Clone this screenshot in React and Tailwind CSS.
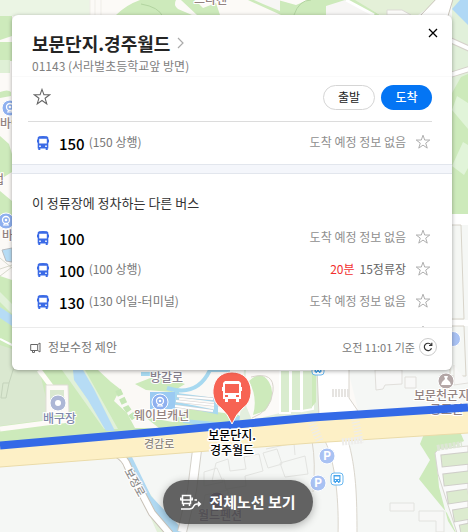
import React from "react";

const routes = [
  { number: "100", direction: "", arrival: "도착 예정 정보 없음" },
  { number: "100", direction: "(100 상행)", minutes: "20분", stops: "15정류장" },
  { number: "130", direction: "(130 어일-터미널)", arrival: "도착 예정 정보 없음" },
  {},
];

function StarIcon({ className }) {
  return (
    <svg viewBox="0 0 17 17" className={className} fill="none" stroke="currentColor" strokeLinejoin="miter" aria-hidden="true">
      <path d="M8.500 1.300l1.800 5.100h5.400l-4.300 3.300 1.600 5.300-4.500-3.200L4 15l1.600-5.300-4.300-3.300h5.400z" />
    </svg>
  );
}

function BusIcon() {
  return (
    <svg viewBox="0 0 12 14" className="h-3.5 w-3 shrink-0" aria-hidden="true">
      <path fill="#3a6ae6" fillRule="evenodd" d="M2 .3Q6-.3 10 .3L11.300 1.500V3.500h.7v3h-.7v6h-.6V14H8.700v-1.500H3.300V14h-2v-1.500H.7v-6H0v-3h.7v-2zM2.200 2.800v4.700h7.600v-4.700zM2.200 9.500v1.400h1.600V9.500zM8.200 9.500v1.400h1.600V9.500z" />
    </svg>
  );
}

function RouteRow({ route }) {
  return (
    <li className="flex h-8 items-center pr-[21px] pl-[25px]">
      <BusIcon />
      <a href="#route" className="ml-2.5 flex items-center gap-1">
        <span className="mt-0.5 text-[15px] leading-5 font-medium text-black">{route.number}</span>
        <span className="mb-0.5 text-xs leading-5 text-[#777]">{route.direction}</span>
      </a>
      <span className="mb-0.5 ml-auto flex gap-[5px] text-xs leading-5 text-[#8f8f8f]">
        {route.minutes ? (
          <>
            <span className="text-[#f22f2f]">{route.minutes}</span>
            <span className="text-[#666]">{route.stops}</span>
          </>
        ) : (
          route.arrival
        )}
      </span>
      <button type="button" aria-label="즐겨찾기" className="mb-0.5 ml-[9px] text-[#aaa]">
        <StarIcon className="size-4" />
      </button>
    </li>
  );
}

function ParkingPin({ x, y }) {
  return (
    <g>
      <circle cx={x} cy={y} r="8" fill="#a9c2f3" stroke="#fff" />
      <text x={x} y={y + 4} fontSize="12" fontWeight="700" fill="#fff" textAnchor="middle">P</text>
    </g>
  );
}

function RidePin({ x, y }) {
  return (
    <g>
      <circle cx={x} cy={y} r="8" fill="#8eb0ef" stroke="#fff" />
      <circle cx={x} cy={y - 1} r="3.500" fill="none" stroke="#fff" strokeWidth="1.300" />
      <circle cx={x} cy={y - 1} r="1.300" fill="#fff" />
      <path d={`M${x - 3} ${y + 4}h6M${x - 1} ${y + 2}l-1 2M${x + 1} ${y + 2}l1 2`} stroke="#fff" />
    </g>
  );
}

function StopPin({ x, y }) {
  return (
    <g>
      <rect x={x - 6} y={y - 6} width="12" height="12" rx="3" fill="#fff" stroke="#68b7f0" />
      <path fill="#48a5ec" fillRule="evenodd" d={`M${x - 3.5} ${y - 4}h7v7h-1v1h-1.500v-1h-2v1h-1.500v-1h-1zM${x - 2.3} ${y - 2.5}v2.500h4.600v-2.500zM${x - 2} ${y + 1}v1h1v-1zM${x + 1} ${y + 1}v1h1v-1z`} />
    </g>
  );
}

function MapBackground() {
  return (
    <svg viewBox="0 0 468 532" preserveAspectRatio="xMidYMin slice" className="absolute inset-0 h-full w-full" role="img" aria-label="지도">
      <rect width="468" height="532" fill="#f5f7f5" />
      {/* upper park */}
      <path fill="#fcfaf7" d="M0 0H400V420H0z" />
      <path fill="#ebf5e4" d="M0 0H90V16H0z" />
      <path fill="#cdeabb" d="M0 16h12v20L0 40zM0 42h12v19H0zM0 136l9 8 3 10v18l-8 5-4-2zM0 191l12 10v15l-12 8zM116 15q10-10 24-15h36q-3 5 2 9l14 6z" />
      <path fill="#dff0d6" d="M0 60h10v13H0z" />
      <path fill="#cdeabb" d="M0 92q8-3 11 0v4L0 98zM181 0h14l8 8 13-5 4 12h-23zM248 0h30l18 5 12-5h50l22 15H281z" />
      <path fill="#f7f6f5" d="M254 0h26v11l-17-7zM326 6l19-6 28 15h-47z" />
      <path fill="#e4f0d8" d="M355 0h84l-21 15h-38z" />
      <path d="M346 0l28 15" stroke="#fff" strokeWidth="3" />
      <path fill="#fcfcfa" stroke="#dddad6" d="M387 10h15l9 5h-24z" />
      <path d="M90 0v15M95 0v15M101 0v15" stroke="#efede8" />
      <path fill="none" stroke="#b2d4a0" d="M141 4q18 3 22 13M294 15q5-15 17-15" />
      <path fill="#e1f0da" d="M452 0h16v123h-16z" />
      <path fill="#b0d8f5" d="M452 9l8-9h8v25z" />
      <path d="M420 16L439 -4h15L448 16" fill="#fff" stroke="#c9c3b9" />
      <path d="M450 40l20 9M450 75l19-6" stroke="#d5d1ca" strokeWidth="6" />
      <path d="M450 40l20 9M450 75l19-6" stroke="#fff" strokeWidth="4" />
      <path fill="#cdeabb" d="M452 93l9-16 7-3v140h-16z" />
      <path fill="#e1f4d9" d="M452 110l5-14 11 7v26zM452 166l11-24 5 3v23l-4 7z" />
      <path fill="#fff" d="M452 214h16v11h-16zM452 320h16v6h-16z" />
      <path fill="#f5f7f4" stroke="#d8d4ca" d="M450 225h11l3 94h-14zM450 326h14l2 50h-16z" />

      {/* left river and lower park */}
      <path fill="#fbf9f6" d="M0 222h12v50H0z" />
      <path d="M0 276l12-9M0 269l12-4M0 258l12 10" stroke="#d8d9cd" />
      <path fill="#b6dcf5" stroke="#b8bcc0" d="M2 250l10-2v14l-6-1z" />
      <path fill="#cdeabb" d="M0 276l12 4v96H0z" />
      <path fill="#e1f1d9" d="M0 292l12 12v10L0 302z" />
      <path fill="#b6dcf5" d="M0 307l12 8v11l-12-8z" />
      <path d="M0 339l14 7" stroke="#fff" strokeWidth="2" />
      <path fill="#cdeabb" d="M0 365h130l32 66L0 447z" />
      <path fill="#dae8d0" d="M0 345l12 4v16h26l13 54L0 426z" />
      <path fill="none" stroke="#c4d3bb" d="M14 367l-5 16H3l-2 15h5l3-15" />
      <path d="M39 370l15 20" stroke="#fffdf8" strokeWidth="5" />
      <path fill="#fdfaf7" stroke="#e0ddd7" d="M46 385h22l1 28-23 4z" />
      <rect x="50" y="390" width="14" height="16" fill="#dae8d0" />
      <path d="M0 429l69-9V412" fill="none" stroke="#fdfaf7" strokeWidth="5" />
      <path fill="#e1f1d9" d="M62 370l42 59h14L85 370z" />
      <path fill="#b6dcf5" d="M73 370h10l11 19 21 42h-9l-18-31-14-20z" />
      <path fill="#fbf9f6" d="M98 370h120v58h-83l-8-15-13-12 6-12-9-7z" />
      <path fill="#cdeabb" d="M135 384l23-9 27 9-13 8-26-2zM145 417l28 5 14-14 52 7v10l-75 7z" />
      <path fill="none" stroke="#c5e6b5" strokeWidth="6" strokeDasharray="6 3" d="M118 390l8 17 10 14" />
      <path fill="none" stroke="#a8d9f0" strokeWidth="4" d="M141 374h14M167 388c22 7 35-1 43-18h20M157 394h20v14M177 395l39 5v12l-39-8M183 421l43 4 17-9" />
      <rect x="150" y="392" width="25" height="17" fill="#9bcaf2" />
      <path fill="none" stroke="#d3d0d0" strokeWidth="3" d="M177 396l36 3M176 401l38 4M175 406l38 5" />
      <path fill="none" stroke="#fff" strokeWidth="2" d="M177 396l36 3M176 401l38 4M175 406l38 5" />
      <path fill="#e3efde" d="M244 370h85v46l-90 10z" />
      <path fill="#fcfaf8" d="M246 370h34v43l-28 7-8-19z" />
      <path fill="#cdeabb" d="M249 381q12-12 20 1t-4 29l-12 4q5-17-4-34z" />
      <path fill="none" stroke="#d9d4cd" d="M251 377q24-6 22 14t-21 27" />
      <path fill="#d9ecce" stroke="#fff" strokeWidth="2" d="M280 370h10v43h-10zM291 370h10v41h-10zM302 370h11v39l-11 2z" />
      <path fill="#cdeabb" d="M312 370h4v32l-4 5z" />
      <path fill="#f5f7f5" d="M348 370h52v42l-42-2z" />
      <path fill="#fff" stroke="#d8d4cd" d="M317 369h32v29l9 13-39 6z" />
      <path fill="#f8f8f7" stroke="#e1dfdb" d="M375 370h27v14l-17 1-2 4-7 1zM405 377h11v11h-11zM454 365v20l14-2" />
      <path d="M332 393h17" stroke="#e6e4e1" strokeWidth="8" strokeDasharray="2 1" />
      <circle cx="453" cy="339" r="7.500" fill="#a9c2f3" stroke="#fff" />

      {/* lower area */}
      <path fill="#e2f0d9" d="M124 457l44 62 17 13h-28z" />
      <path fill="#b0d9f2" d="M127 457h5l19 39 34 36h-13l-26-29z" />
      <path fill="none" stroke="#c8c1b7" strokeWidth="8" d="M117 454q8 4 11 13l24 46 18 21" />
      <path fill="none" stroke="#fff" strokeWidth="6" d="M117 454q8 4 11 13l24 46 18 21" />
      <path fill="none" stroke="#d3d0c9" strokeWidth="10" d="M197 450l-5 40-10 42" />
      <path fill="none" stroke="#fff" strokeWidth="8" d="M197 450l-5 40-10 42" />
      <path fill="none" stroke="#e3e4e1" d="M216 463l12-4 2 12 16-2-2-12 15-3 4 17-18 5 1 10-20 3-2-10-12 2zM204 472l13-4 6 14-19 4zM263 453l14-4 5 15-14 4zM280 463l25-7 3 18-23 3zM205 495l23-5v18l-26 4zM266 449l28-6 1 12" />
      <path fill="#fff" stroke="#dad6cd" d="M325 441l23-1c8 29 9 55 9 95h-19c1-31-2-72-13-94z" />
      <path fill="none" stroke="#dad6cd" d="M312 441q4 22 1 51" />
      <path fill="#cdeabb" d="M424 434h37l3 7-28 13 3 33 9 34 10 16-11-24-28-34 11-19-10-16z" />
      <path fill="#fafafa" stroke="#d8d6d1" d="M435 453q4-6 12-5l21-2v90h-10l-10-31-10-31z" />
      <path d="M441 461l28-3M443 480l26-3M447 498l21-3M453 516l18-3M460 531l10-2" stroke="#cfcec9" strokeWidth="13" />
      <path d="M442 461l27-3M444 480l25-3M448 498l20-3M454 516l16-3M461 531l10-2" stroke="#dcebcf" strokeWidth="11" />
      <path d="M437 448l25-4" stroke="#dde6d5" strokeWidth="6" strokeDasharray="3 1" />
      <path fill="#f7f7f6" stroke="#e2e3df" d="M390 503h24v8h-24zM419 511h25v21h-8v-11h-17z" />

      {/* main road and selected line */}
      <path fill="#fdf0c6" d="M0 446l156-12 156-15 156-10v24l-156 10-156 12-156 12z" />
      <path fill="none" stroke="#eadba9" d="M0 467l156-12 156-12 156-10" />
      <path d="M355 419l5 24M312 423l8 19" stroke="#ececec" strokeWidth="8" strokeDasharray="1 2" />
      <path d="M342 442l20-2" stroke="#eeedeb" strokeWidth="7" strokeDasharray="2 1" />

      <RidePin x={10} y={108} />
      <RidePin x={6} y={221} />
      <RidePin x={160} y={402} />
      <circle cx="58" cy="403" r="8" fill="#adb7d6" stroke="#fff" />
      <circle cx="58" cy="403" r="3" fill="#fff" />
      <circle cx="446" cy="381" r="8" fill="#b4a7a7" stroke="#fff" />
      <path d="M444 376h4l-1 3q3 2 4 6h-10q1-4 4-6z" fill="#fff" />
      <ParkingPin x={327} y={456} />
      <ParkingPin x={318} y={483} />
      <StopPin x={337} y={479} />
      <StopPin x={318} y={369} />
      <circle cx="217" cy="500" r="8" fill="#8f72a5" stroke="#fff" />
      <circle cx="217" cy="500" r="3" fill="#fff" />

      <g fontSize="12" fontWeight="500" stroke="#fff" strokeWidth="2" paintOrder="stroke" fill="#938280">
        <text x="194" y="4">드라켄</text>
        <text x="0" y="128">바이</text>
        <text x="-7" y="184">컵</text>
        <text x="2" y="240">바</text>
        <text x="134" y="420">웨이브캐넌</text>
        <text x="414" y="400">보문천군지구</text>
        <text x="430" y="414">공조원</text>
        <text x="43" y="423" fill="#7f89ab">배구장</text>
        <text x="150" y="382" fill="#88828e">방갈로</text>
        <text x="198" y="520" fill="#8b799c">월드펜션</text>
        <text x="144" y="448" fontSize="11" fill="#918a81" strokeWidth="1">경감로</text>
        <text x="124" y="471" fontSize="11" fill="#8e8e8e" transform="rotate(61 124 471)">보정로</text>
      </g>

      <path fill="none" stroke="#346ae7" strokeWidth="8" d="M0 445.500l156-13.500 156-14.500 156-10" />

      <path fill="#f76353" stroke="#fff" d="M232 424q-4-10-11-16c-13-8-11-36 11-36s24 28 11 36q-7 6-11 16z" />
      <path fill="#fff" fillRule="evenodd" d="M225 381h14l2 2v4h1v4h-1v8h-2v3h-3v-3h-8v3h-3v-3h-2v-8h-1v-4h1v-4zM225 384v9h14v-9zM225 395v2h3v-2zM236 395v2h3v-2z" />
      <g fontSize="12" fontWeight="500" fill="#000" stroke="#fff" strokeWidth="3" strokeLinejoin="round" paintOrder="stroke" textAnchor="middle">
        <text x="232" y="440">보문단지.</text>
        <text x="232" y="455">경주월드</text>
      </g>
    </svg>
  );
}

export default function App() {
  return (
    <main className="relative flex min-h-screen flex-col overflow-hidden font-['Noto_Sans_CJK_KR',sans-serif]">
      <MapBackground />

      <section className="relative mt-[15px] mr-4 ml-3 rounded-md bg-white shadow-[0_1px_4px_rgba(0,0,0,0.35)]">
        <header className="relative border-b border-[#fafafa] px-5 pt-4">
          <h1 className="text-lg leading-6 font-bold text-[#242424]">
            <a href="#stop" className="flex items-center gap-[7px]">
              보문단지.경주월드
              <svg viewBox="0 0 7 12" className="h-3 w-[7px]" fill="none" stroke="#aaa" strokeWidth="1.200" aria-hidden="true">
                <path d="M1 1l5 5-5 5" />
              </svg>
            </a>
          </h1>
          <p className="mt-px text-xs leading-5 text-[#808080]">01143 (서라벌초등학교앞 방면)</p>
          <button type="button" aria-label="닫기" className="absolute top-2.5 right-[11px] p-0.5 text-black">
            <svg viewBox="0 0 10 10" className="m-px size-2.5" fill="none" stroke="currentColor" strokeWidth="1.300" aria-hidden="true">
              <path d="M1 1l8 8M9 1L1 9" />
            </svg>
          </button>
        </header>

        <div className="mr-5 ml-4 flex h-[45px] items-center gap-1.5 border-b border-[#dcdcdc] pb-1">
          <button type="button" aria-label="정류장 즐겨찾기" className="mr-auto ml-[5px] text-[#666]">
            <StarIcon className="size-[18px]" />
          </button>
          <button type="button" className="h-[25px] w-[52px] rounded-full border border-[#d5d5d5] text-xs leading-5 text-[#222]">출발</button>
          <button type="button" className="h-[25px] w-[51px] rounded-full bg-[#0475f4] text-xs leading-5 font-medium text-white">도착</button>
        </div>

        <ul className="pt-[5px] pb-[5px]">
          <RouteRow route={{ number: "150", direction: "(150 상행)", arrival: "도착 예정 정보 없음" }} />
        </ul>
        <div className="h-2.5 border-y border-[#e2e6ed] bg-[#f4f6fb]" />

        <h2 className="px-5 pt-[19px] pb-[9px] text-[13px] leading-5 text-[#333]">이 정류장에 정차하는 다른 버스</h2>
        <ul className="h-[105px] overflow-hidden">
          {routes.map((route, index) => (
            <RouteRow key={index} route={route} />
          ))}
        </ul>

        <footer className="flex h-[43px] items-center justify-between border-t border-[#ebebeb] pr-[15px] pb-1 pl-[18px] text-[#777]">
          <a href="#suggest" className="flex items-center gap-[7px] text-xs leading-5">
            <svg viewBox="0 0 11 11" className="size-[11px]" fill="none" stroke="#666" aria-hidden="true">
              <path d="M.7 2.500h7v6h-7zM2.500 8.500v2h2v-2M7.700 2.500l2.300-1.500v9L7.700 8.500" />
            </svg>
            정보수정 제안
          </a>
          <div className="flex items-center gap-1 text-[11px] leading-5">
            오전 11:01 기준
            <button type="button" aria-label="새로고침" className="flex size-[18px] items-center justify-center rounded-full border border-[#ccc]">
              <svg viewBox="0 0 10 10" className="size-2.5" fill="none" stroke="#333" strokeWidth="1.200" aria-hidden="true">
                <path d="M8.500 6.300A3.700 3.700 0 1 1 8 2.700M8.800.8v2.700H6" />
              </svg>
            </button>
          </div>
        </footer>
      </section>

      <button type="button" className="relative mt-auto mb-2 ml-2 flex h-11 items-center gap-[7px] self-center rounded-full bg-[#484848]/85 px-[17px] text-[15px] leading-5 font-bold text-white shadow-[0_2px_8px_rgba(0,0,0,0.3)]">
        <svg viewBox="0 0 22 18" className="h-[18px] w-[22px]" fill="none" stroke="currentColor" strokeWidth="1.500" aria-hidden="true">
          <path d="M2.500 10.500v-8h8v8zM1.500 7h10M3.500 11v2M9.500 11v2M.8 4.500v3M12.200 4.500v3M1 16h8.500q3 0 4-2.500t3.500-2.500h3.500M18 8.800l2.300 2.200-2.300 2.200M14.500 7h2.500" />
        </svg>
        전체노선 보기
      </button>
    </main>
  );
}
